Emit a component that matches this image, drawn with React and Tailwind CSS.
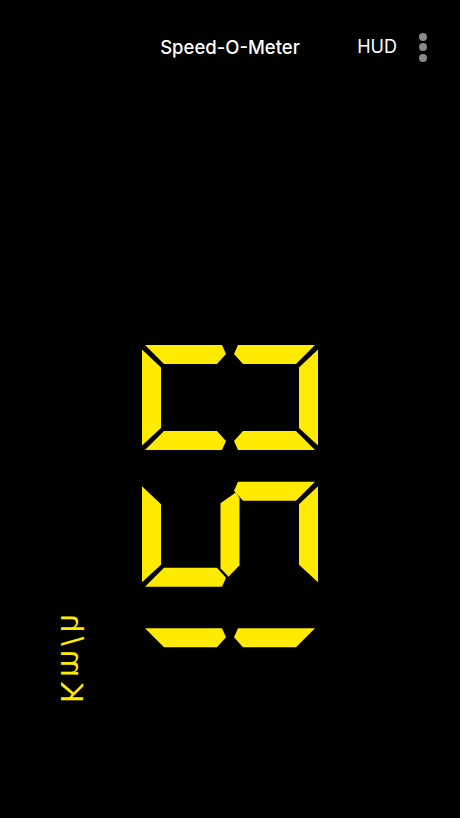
import React from "react";

const Y = "#FFEB00";

function segs(T, on) {
  const B = T + 105;
  const all = {
    tl: `145,${T} 222,${T} 226,${T + 9} 217,${T + 19} 164,${T + 19}`,
    tr: `315,${T} 238,${T} 234,${T + 9} 243,${T + 19} 296,${T + 19}`,
    bl: `145,${B} 222,${B} 226,${B - 9} 217,${B - 19} 164,${B - 19}`,
    br: `315,${B} 238,${B} 234,${B - 9} 243,${B - 19} 296,${B - 19}`,
    vl: `142,${T + 4.5} 161,${T + 22.5} 161,${T + 83} 142,${T + 100.5}`,
    vr: `318,${T + 4.5} 299,${T + 22.5} 299,${T + 83} 318,${T + 100.5}`,
    vm: `220.5,${T + 21.5} 236,${T + 10.5} 239.5,${T + 16.5} 239.5,${T + 83.5} 228.5,${T + 95} 220.5,${T + 86.5}`,
  };
  return on.map((k) => <polygon key={k + T} points={all[k]} fill={Y} />);
}

function SpeedDisplay() {
  return (
    <svg width="178" height="303" viewBox="141 345 178 303" className="block">
      {segs(345, ["tl", "tr", "bl", "br", "vl", "vr"])}
      {segs(481.7, ["vl", "bl", "vm", "tr", "vr"])}
      {segs(628.3, ["tl", "tr"])}
    </svg>
  );
}

export default function App() {
  return (
    <div
      className="w-full h-[818px] bg-black flex flex-col overflow-hidden"
      style={{ fontFamily: "Inter, 'Liberation Sans', sans-serif" }}
    >
      <header className="h-[94px] grid grid-cols-[1fr_auto_1fr] items-center">
        <div />
        <div className="text-white text-[18.5px] font-medium leading-none">
          Speed-O-Meter
        </div>
        <div className="flex items-center justify-end pr-[33px] gap-[22px]">
          <span className="text-white text-[18px] leading-none">HUD</span>
          <div className="flex flex-col gap-[2.5px]">
            <span className="block w-[8px] h-[8px] rounded-full bg-[#8a8a8a]" />
            <span className="block w-[8px] h-[8px] rounded-full bg-[#8a8a8a]" />
            <span className="block w-[8px] h-[8px] rounded-full bg-[#8a8a8a]" />
          </div>
        </div>
      </header>
      <main className="flex items-start">
        <div className="w-[141px] pl-[56px] pt-[516px]">
          <span
            className="block -scale-y-100 [writing-mode:vertical-rl] text-[32px] leading-none tracking-[4.5px] text-[#FFEB00]"
            style={{ fontFamily: "'Liberation Sans', sans-serif" }}
          >
            Km/h
          </span>
        </div>
        <div className="pt-[251px]">
          <SpeedDisplay />
        </div>
      </main>
    </div>
  );
}
